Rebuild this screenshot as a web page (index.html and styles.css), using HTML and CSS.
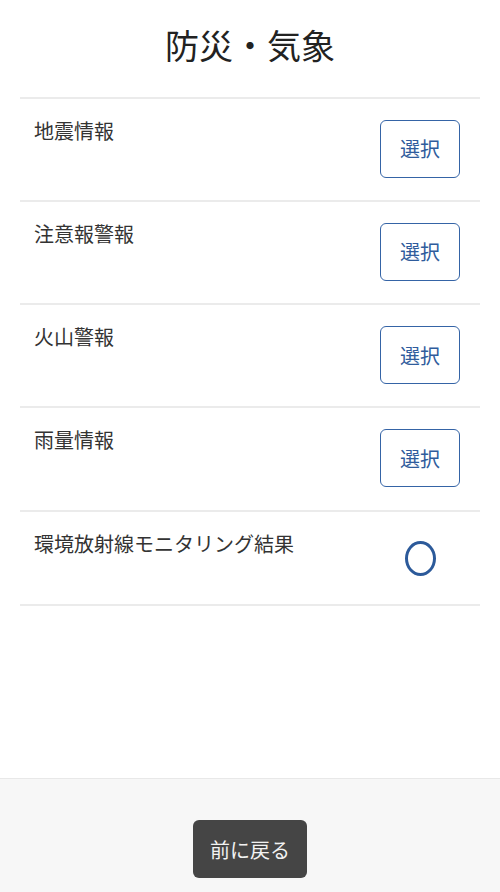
FILE: index.html
```html
<!DOCTYPE html>
<html lang="ja">
<head>
<meta charset="utf-8">
<title>防災・気象</title>
<link rel="stylesheet" href="styles.css">
</head>
<body>
<div class="page">
  <header class="header">
    <h1 class="title">防災・気象</h1>
  </header>
  <main class="main">
    <ul class="list">
      <li class="row">
        <span class="label">地震情報</span>
        <button class="select-btn" type="button">選択</button>
      </li>
      <li class="row">
        <span class="label">注意報警報</span>
        <button class="select-btn" type="button">選択</button>
      </li>
      <li class="row">
        <span class="label">火山警報</span>
        <button class="select-btn" type="button">選択</button>
      </li>
      <li class="row">
        <span class="label">雨量情報</span>
        <button class="select-btn" type="button">選択</button>
      </li>
      <li class="row row-last">
        <span class="label">環境放射線モニタリング結果</span>
        <span class="radio-wrap"><span class="radio"></span></span>
      </li>
    </ul>
  </main>
  <footer class="footer">
    <button class="back-btn" type="button">前に戻る</button>
  </footer>
</div>
</body>
</html>
```
FILE: styles.css
```css
* { box-sizing: border-box; }
html, body {
  margin: 0;
  padding: 0;
  background: #ffffff;
}
body {
  font-family: "Noto Sans CJK JP", "Noto Sans", sans-serif;
  color: #333333;
}
.page {
  display: flex;
  flex-direction: column;
  min-height: 100vh;
}
.header {
  height: 96.5px;
  display: flex;
  align-items: center;
  justify-content: center;
  padding-bottom: 5px;
}
.title {
  margin: 0;
  font-size: 34px;
  font-weight: 400;
  color: #222222;
  line-height: 1.2;
  letter-spacing: 0;
}
.main {
  flex: 1;
}
.list {
  list-style: none;
  margin: 0 20px;
  padding: 0;
  border-bottom: 2px solid #ebebeb;
}
.row {
  display: flex;
  justify-content: space-between;
  align-items: flex-start;
  border-top: 2px solid #ebebeb;
  padding: 21px 20px 22.25px 14px;
}
.label {
  font-size: 20px;
  line-height: 20px;
  color: #333333;
  padding-top: 1px;
}
.select-btn {
  width: 80px;
  height: 58px;
  border: 1.5px solid #3564a6;
  border-radius: 6px;
  background: #ffffff;
  color: #2f5c9c;
  font-family: "Noto Sans CJK JP", "Noto Sans", sans-serif;
  font-size: 20px;
  padding: 0;
  margin: 0;
}
.row-last {
  padding-bottom: 21px;
}
.radio-wrap {
  width: 80px;
  height: 50px;
  display: flex;
  align-items: center;
  justify-content: center;
  padding-top: 2px;
}
.radio {
  display: block;
  width: 31px;
  height: 35px;
  border: 3px solid #2c5a9a;
  border-radius: 50%;
}
.footer {
  height: 114px;
  background: #f7f7f7;
  border-top: 1px solid #e8e8e8;
  display: flex;
  justify-content: center;
  align-items: flex-start;
  padding-top: 41px;
}
.back-btn {
  width: 114px;
  height: 58px;
  background: #454545;
  border: none;
  border-radius: 6px;
  color: #f2f2f2;
  font-family: "Noto Sans CJK JP", "Noto Sans", sans-serif;
  font-size: 20px;
  padding: 0;
}
```
